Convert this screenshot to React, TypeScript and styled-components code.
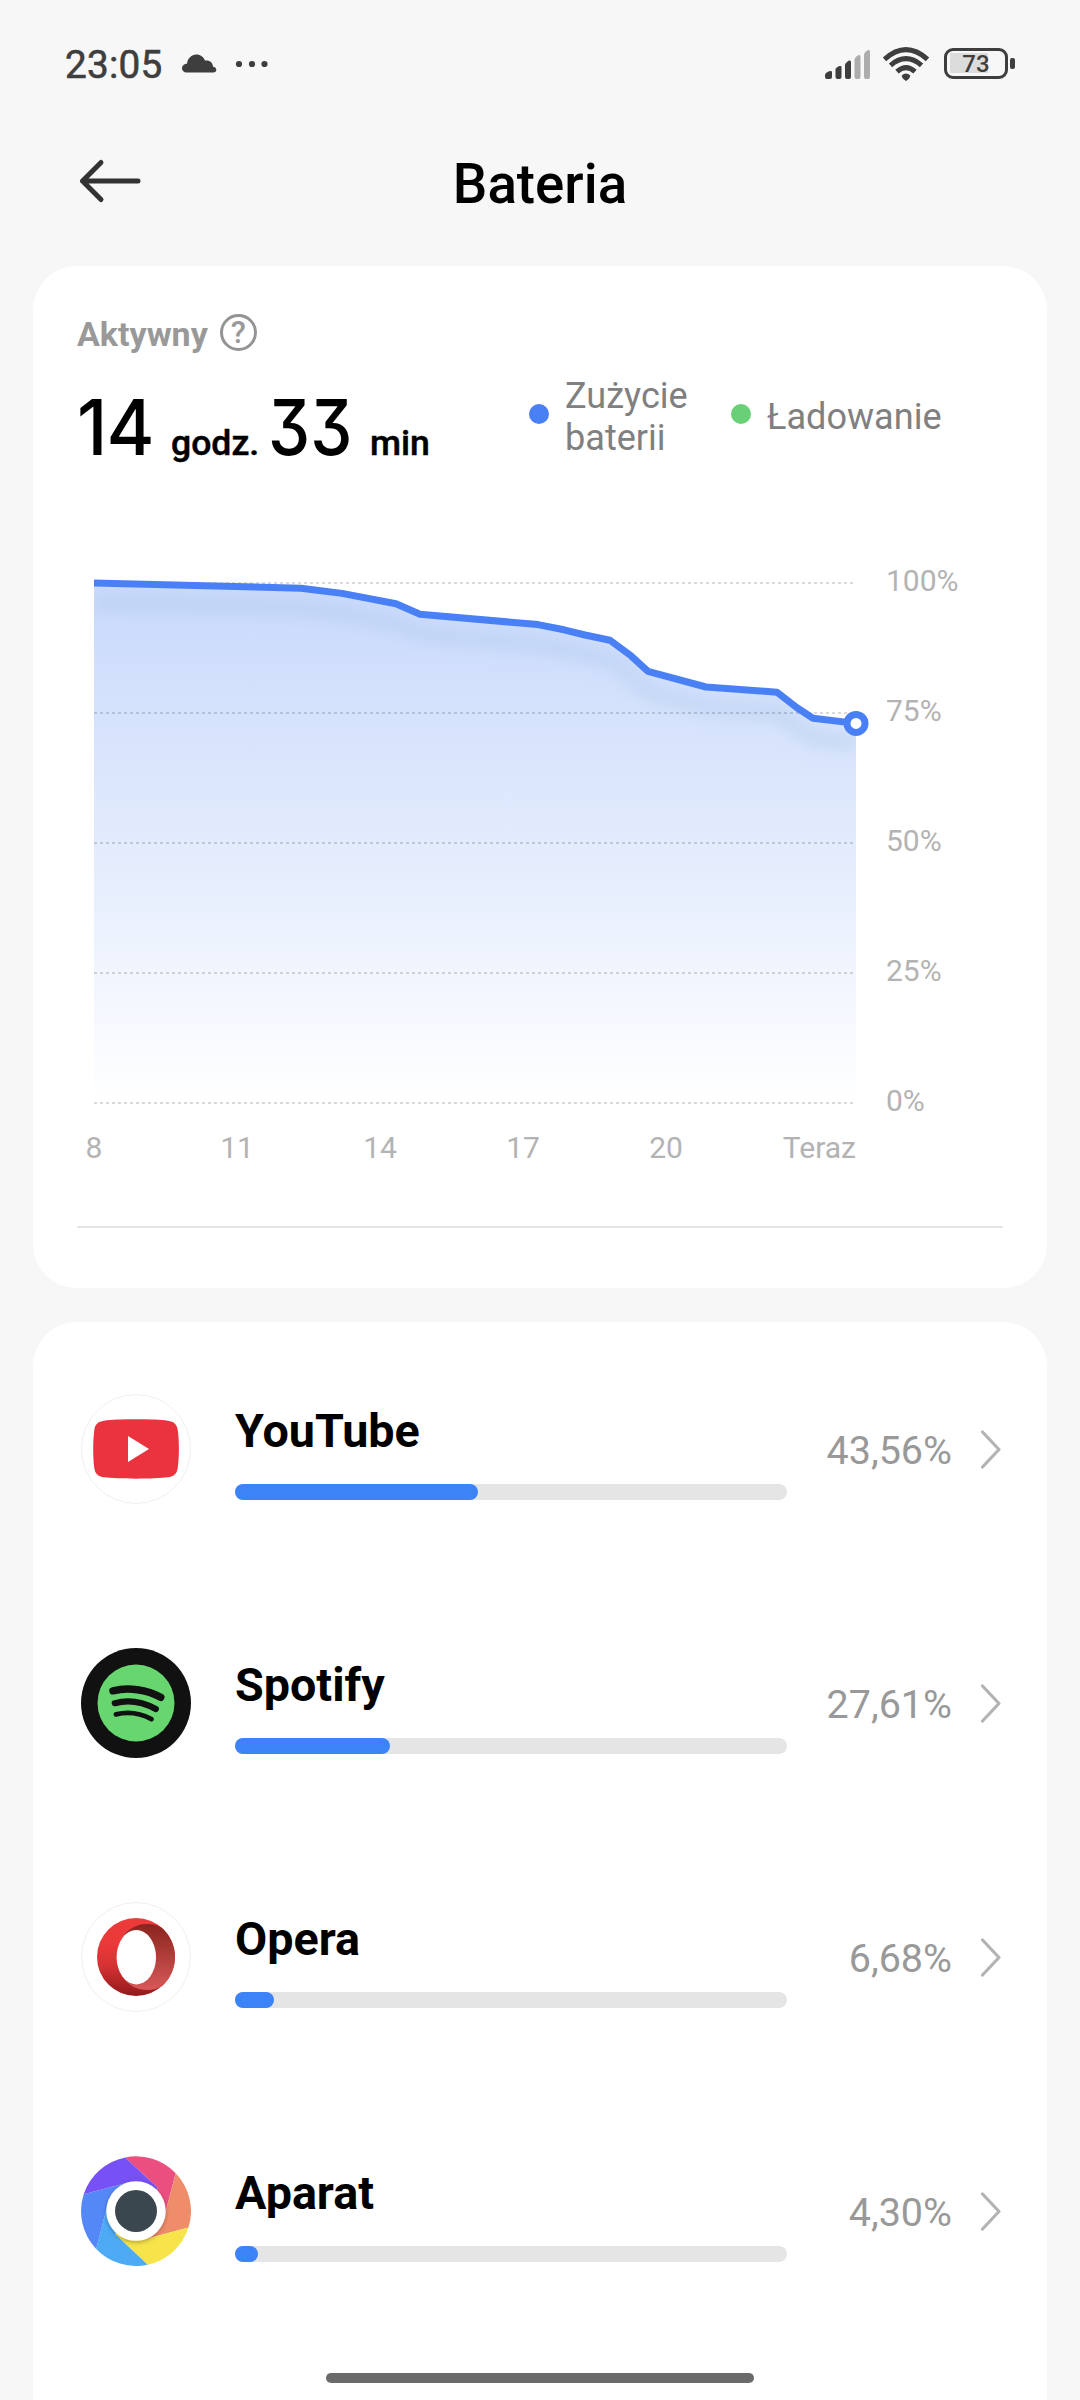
import React from "react";
import styled, { createGlobalStyle } from "styled-components";

const Global = createGlobalStyle`
  * { box-sizing: border-box; }
  body { margin: 0; background: #f7f7f7; }
`;

const Screen = styled.div`
  width: 1080px;
  height: 2400px;
  overflow: hidden;
  position: relative;
  display: flex;
  flex-direction: column;
  background: #f7f7f7;
  font-family: Roboto, "Noto Sans", sans-serif;
  color: #000;
`;

const StatusBar = styled.div`
  flex: none;
  height: 88px;
  padding: 39px 65px 0 65px;
  display: flex;
  align-items: center;
  justify-content: space-between;
`;

const StatusGroup = styled.div`
  display: flex;
  align-items: center;
`;

const Clock = styled.span`
  width: 117px;
  padding-top: 2px;
  font-size: 38.7px;
  line-height: 46px;
  letter-spacing: 0.2px;
  color: #3e3e3e;
  -webkit-text-stroke: 0.6px #3e3e3e;
`;

const Battery = styled.div`
  display: flex;
  align-items: center;
  margin-left: 14px;
  gap: 2px;
`;

const BatteryBody = styled.div`
  width: 64px;
  height: 31px;
  border: 3px solid #3e3e3e;
  border-radius: 9px;
  display: flex;
  align-items: center;
  justify-content: center;
  background: linear-gradient(#dcdcdc, #dcdcdc) 3px 2px / 38px 20px no-repeat;
  font-size: 24px;
  line-height: 24px;
  font-weight: 500;
  color: #3e3e3e;
`;

const BatteryTip = styled.div`
  width: 5px;
  height: 11px;
  border-radius: 2px;
  background: #3e3e3e;
`;

const Header = styled.header`
  flex: none;
  height: 178px;
  padding: 8px 78px 0;
  display: grid;
  grid-template-columns: 64px 1fr 64px;
  align-items: center;
`;

const Title = styled.h1`
  margin: 0;
  padding-top: 6px;
  text-align: center;
  font-size: 54.7px;
  line-height: 64px;
  font-weight: 500;
`;

const Card = styled.section<{ $h: number }>`
  flex: none;
  height: ${(p) => p.$h}px;
  margin: 0 33px 34px;
  padding: 0 44px;
  border-radius: 44px;
  background: #fff;
`;

const Summary = styled.div`
  display: grid;
  grid-template-columns: 452px 1fr;
  height: 250px;
`;

const ActiveLabel = styled.div`
  display: flex;
  align-items: center;
  gap: 12px;
  padding-top: 46px;
  font-size: 34px;
  line-height: 44px;
  font-weight: 700;
  color: #999;
`;

const HelpMark = styled.span`
  width: 37px;
  height: 37px;
  margin-bottom: 3px;
  border: 3px solid #949494;
  border-radius: 50%;
  font-size: 31px;
  line-height: 32px;
  font-weight: 500;
  text-align: center;
`;

const Duration = styled.div`
  display: flex;
  align-items: baseline;
  margin-top: 26px;
  line-height: 90px;
  white-space: nowrap;
`;

const Digits = styled.span<{ $w: number; $squeeze: number; $spacing: number }>`
  width: ${(p) => p.$w}px;
  font-family: Inter, Roboto, sans-serif;
  font-size: 77px;
  font-weight: 500;
  letter-spacing: ${(p) => p.$spacing}px;
  font-feature-settings: "cv09" 1;
  transform: scaleX(${(p) => p.$squeeze});
  transform-origin: left;
`;

const Unit = styled.span<{ $w: number }>`
  width: ${(p) => p.$w}px;
  font-size: 35.6px;
  font-weight: 500;
  -webkit-text-stroke: 0.5px #000;
`;

const Legend = styled.div`
  display: flex;
  height: 84px;
  margin-top: 109px;
`;

const LegendItem = styled.div<{ $w: number }>`
  display: flex;
  align-items: center;
  width: ${(p) => p.$w}px;
  font-size: 36.1px;
  line-height: 42px;
  color: #808080;
`;

const Dot = styled.i<{ $c: string }>`
  flex: none;
  width: 20px;
  height: 20px;
  margin: 0 16px 6px 0;
  border-radius: 50%;
  background: ${(p) => p.$c};
`;

const Chart = styled.div`
  display: flex;
  padding-left: 17px;
  height: 651px;
`;

const PlotColumn = styled.div`
  width: 792px;
`;

const Plot = styled.svg`
  display: block;
`;

const XAxis = styled.div`
  display: flex;
  gap: 83px;
  width: 792px;
  margin: 12px 0 0 -30px;
  font-size: 30px;
  line-height: 40px;
  color: #b3b3b3;
`;

const XLabel = styled.span`
  width: 60px;
  text-align: center;
  &:last-child {
    width: auto;
    margin-left: auto;
  }
`;

const YAxis = styled.div`
  display: flex;
  flex-direction: column;
`;

const YLabel = styled.span`
  height: 130px;
  font-size: 30px;
  line-height: 130px;
  color: #b3b3b3;
`;

const Divider = styled.hr`
  height: 2px;
  margin: 59px 0 0;
  border: 0;
  background: #e5e5e5;
`;

const Row = styled.div`
  display: grid;
  grid-template-columns: 154px 552px 1fr 51px;
  align-items: center;
  height: 254px;
  padding-left: 4px;
`;

const RowMain = styled.div`
  padding-top: 5px;
`;

const AppName = styled.div`
  font-size: 46.7px;
  line-height: 54px;
  font-weight: 700;
`;

const Track = styled.div`
  height: 16px;
  margin-top: 26px;
  border-radius: 8px;
  background: #e5e5e5;
`;

const Fill = styled.div`
  height: 100%;
  border-radius: 8px;
  background: #3c83f7;
`;

const Percent = styled.span`
  padding-top: 2px;
  text-align: right;
  font-size: 39.5px;
  color: #999;
`;

const Chevron = styled.svg`
  justify-self: end;
`;

const HomeIndicator = styled.div`
  position: absolute;
  left: 326px;
  bottom: 17px;
  width: 428px;
  height: 10px;
  border-radius: 5px;
  background: #6a6a6a;
`;

const YouTubeIcon = () => (
  <svg width="110" height="110" viewBox="0 0 110 110">
    <circle cx="55" cy="55" r="54.5" fill="#fff" stroke="#e8e8e8" strokeWidth="0.7" />
    <path
      d="M23.500 26.700C35 24.900 75 24.900 86.500 26.700C93.500 27.500 96 30.500 96.800 36.500C98.300 47 98.300 63 96.800 73.500C96 79.500 93.500 82.500 86.500 83.300C75 85.100 35 85.100 23.500 83.300C16.500 82.500 14 79.500 13.200 73.500C11.900 63 11.900 47 13.200 36.500C14 30.500 16.500 27.500 23.500 26.700Z"
      fill="#eb323f"
    />
    <path d="M47 42L68 55L47 68Z" fill="#fff" />
  </svg>
);

const SpotifyIcon = () => (
  <svg width="110" height="110" viewBox="0 0 110 110">
    <circle cx="55" cy="55" r="55" fill="#111" />
    <circle cx="55" cy="55" r="38.500" fill="#67d66f" />
    <g fill="none" stroke="#111" strokeLinecap="round">
      <path d="M32 42.800C47 39 66 41.500 79.700 49.300" strokeWidth="7.500" />
      <path d="M33.800 55.200C47 51.500 62 54 74.800 61" strokeWidth="6.200" />
      <path d="M35 66.400C47 63.500 59 65 70.500 71.200" strokeWidth="4.800" />
    </g>
  </svg>
);

const OperaIcon = () => (
  <svg width="110" height="110" viewBox="0 0 110 110">
    <defs>
      <linearGradient id="operaRed" x1="0" y1="0" x2="0" y2="1">
        <stop offset="0.3" stopColor="#ec3a3b" />
        <stop offset="0.6" stopColor="#d83233" />
        <stop offset="1" stopColor="#921a1b" />
      </linearGradient>
      <linearGradient id="operaDark" x1="0" y1="0" x2="0" y2="1">
        <stop offset="0" stopColor="#8a241e" />
        <stop offset="1" stopColor="#d85958" />
      </linearGradient>
    </defs>
    <circle cx="55" cy="55" r="54.500" fill="#fff" stroke="#e8e8e8" strokeWidth="0.7" />
    <circle cx="55" cy="55" r="39" fill="url(#operaRed)" />
    <path
      d="M43 33C49 26 56 22 66 22C72 22 76 23 80.500 25.500A39 39 0 0 1 80.500 84.500C76 87 72 88 66 88C56 88 49 84 43 77Z"
      fill="url(#operaDark)"
    />
    <ellipse cx="55.300" cy="55.200" rx="19.700" ry="27.200" fill="#fff" />
  </svg>
);

const CameraIcon = () => (
  <svg width="110" height="110" viewBox="0 0 110 110">
    <defs>
      <filter id="lensShadow" x="-30%" y="-30%" width="160%" height="160%">
        <feDropShadow dx="0" dy="1.500" stdDeviation="2" floodColor="#000" floodOpacity="0.3" />
      </filter>
    </defs>
    <path d="M44.200 1.400A55 55 0 0 1 94.700 17.200L84 58L55 55L77 32Z" fill="#ea4f80" />
    <path d="M94.700 17.200A55 55 0 0 1 107.500 71.600L63 83.500L55 55L84 58Z" fill="#ef8d6b" />
    <path d="M107.500 71.600A55 55 0 0 1 66.700 108.700L34 78L55 55L63 83.500Z" fill="#f7e34a" />
    <path d="M66.700 108.700A55 55 0 0 1 15.200 93L26 51L55 55L34 78Z" fill="#4dabf5" />
    <path d="M15.200 93A55 55 0 0 1 2.700 38.200L47 26.500L55 55L26 51Z" fill="#5588f7" />
    <path d="M2.700 38.200A55 55 0 0 1 44.200 1.400L77 32L55 55L47 26.500Z" fill="#7750f6" />
    <circle cx="55" cy="55" r="29.700" fill="#fff" filter="url(#lensShadow)" />
    <circle cx="55" cy="55" r="21" fill="#3b474f" />
  </svg>
);

const apps = [
  { name: "YouTube", percent: "43,56%", fill: 44, Icon: YouTubeIcon },
  { name: "Spotify", percent: "27,61%", fill: 28, Icon: SpotifyIcon },
  { name: "Opera", percent: "6,68%", fill: 7, Icon: OperaIcon },
  { name: "Aparat", percent: "4,30%", fill: 4.15, Icon: CameraIcon },
];

// x offset inside the plot, battery level in percent
const levels: [number, number][] = [
  [0, 100], [207, 99], [248, 98], [302, 96], [326, 94], [444, 92], [470, 91],
  [491, 90], [516, 89], [537, 86], [554, 83], [612, 80], [683, 79], [703, 76],
  [719, 74], [762, 73],
];
const yOf = (level: number) => 67 + (100 - level) * 5.2;
const line = levels.map(([x, l]) => `${x},${yOf(l)}`).join(" ");
const area = `0,587 ${line} 762,587`;

const BatteryPlot = () => (
  <Plot width="792" height="600" viewBox="0 0 792 600">
    <defs>
      <linearGradient id="areaFill" gradientUnits="userSpaceOnUse" x1="0" y1="67" x2="0" y2="587">
        <stop offset="0" stopColor="#4a80f5" stopOpacity="0.300" />
        <stop offset="0.5" stopColor="#4a82f0" stopOpacity="0.158" />
        <stop offset="1" stopColor="#4a80f5" stopOpacity="0" />
      </linearGradient>
      <filter id="soft" filterUnits="userSpaceOnUse" x="-20" y="40" width="830" height="300">
        <feGaussianBlur stdDeviation="7" />
      </filter>
      <clipPath id="areaClip">
        <polygon points={area} />
      </clipPath>
      <clipPath id="plotClip">
        <rect x="0" y="0" width="792" height="600" />
      </clipPath>
    </defs>
    <polygon points={area} fill="url(#areaFill)" />
    <g clipPath="url(#areaClip)">
      <polyline
        points={line}
        transform="translate(0 20)"
        fill="none"
        stroke="#a6c8e8"
        strokeOpacity="0.340"
        strokeWidth="18"
        filter="url(#soft)"
      />
    </g>
    {[67, 197, 327, 457, 587].map((y) => (
      <line key={y} x1="0" x2="760" y1={y} y2={y} stroke="#000" strokeOpacity="0.150" strokeWidth="2" strokeDasharray="3 3" />
    ))}
    <polyline points={line} fill="none" stroke="#4a80f5" strokeWidth="7" strokeLinejoin="round" clipPath="url(#plotClip)" />
    <circle cx="762" cy={yOf(73)} r="9" fill="#fff" stroke="#4a80f5" strokeWidth="7" />
  </Plot>
);

export default function App() {
  return (
    <Screen>
      <Global />
      <StatusBar>
        <StatusGroup>
          <Clock>23:05</Clock>
          <svg width="90" height="30" viewBox="182 50 90 30" fill="#3e3e3e">
            <path d="M186.500 73.500C184 73.500 182 71.700 182 69.300C182 67 184 64.800 187 64.800C187.500 59.500 191.500 55.500 196.500 55.500C200.500 55.500 203.500 58 205 61.500C209.500 60.800 213 63.500 213 67.800C215 68 216.300 69.300 216.300 71C216.300 72.500 215.200 73.500 213.500 73.500Z" />
            <circle cx="239" cy="65" r="3.100" />
            <circle cx="252" cy="65" r="3.100" />
            <circle cx="264.500" cy="65" r="3.100" />
          </svg>
        </StatusGroup>
        <StatusGroup>
          <svg width="105" height="40" viewBox="825 44 105 40">
            <g fill="#3e3e3e">
              <path d="M825 75C825 73 827 72 830 71Q832 70.500 832 72V77Q832 79 830 79H827Q825 79 825 77Z" />
              <path d="M835.500 69.500Q835.500 67.500 839.500 66Q841.500 65.500 841.500 67V77Q841.500 79 839.500 79H837.500Q835.500 79 835.500 77Z" />
              <path d="M845 65Q845 63 849 60.500Q851 60 851 62V77Q851 79 849 79H847Q845 79 845 77Z" />
            </g>
            <g fill="#adadad">
              <path d="M854.500 60Q854.500 57.500 858.500 55Q860.500 54.500 860.500 56.500V77Q860.500 79 858.500 79H856.500Q854.500 79 854.500 77Z" />
              <path d="M864 55Q864 52.500 868 50Q870 49.500 870 51.500V77Q870 79 868 79H866Q864 79 864 77Z" />
            </g>
            <g fill="none" stroke="#3e3e3e" strokeWidth="5">
              <path d="M884.500 59.300Q906 40 927.500 59.300" />
              <path d="M890.500 65.300Q906 52 921.500 65.300" />
              <path d="M897 71.700Q906 63.500 915 71.700" />
            </g>
            <path d="M901.700 75.500Q906 71.500 910.300 75.500Q910 78.500 906 81Q902 78.500 901.700 75.500Z" fill="#3e3e3e" />
          </svg>
          <Battery>
            <BatteryBody>73</BatteryBody>
            <BatteryTip />
          </Battery>
        </StatusGroup>
      </StatusBar>

      <Header>
        <svg width="64" height="48" viewBox="78 157 64 48" fill="none" stroke="#333" strokeWidth="5" strokeLinecap="round" strokeLinejoin="round">
          <path d="M101 162.500L82.500 181L101 199.500M82.500 181H138" />
        </svg>
        <Title>Bateria</Title>
      </Header>

      <Card $h={1022}>
        <Summary>
          <div>
            <ActiveLabel>
              Aktywny
              <HelpMark>?</HelpMark>
            </ActiveLabel>
            <Duration>
              <Digits $w={94} $squeeze={0.95} $spacing={-1}>14</Digits>
              <Unit $w={97}>godz.</Unit>
              <Digits $w={102} $squeeze={0.87} $spacing={0}>33</Digits>
              <Unit $w={70}>min</Unit>
            </Duration>
          </div>
          <Legend>
            <LegendItem $w={202}>
              <Dot $c="#4a80f5" />
              <span>Zużycie<br />baterii</span>
            </LegendItem>
            <LegendItem $w={230}>
              <Dot $c="#6ad077" />
              <span>Ładowanie</span>
            </LegendItem>
          </Legend>
        </Summary>
        <Chart>
          <PlotColumn>
            <BatteryPlot />
            <XAxis>
              {["8", "11", "14", "17", "20", "Teraz"].map((t) => (
                <XLabel key={t}>{t}</XLabel>
              ))}
            </XAxis>
          </PlotColumn>
          <YAxis>
            {["100%", "75%", "50%", "25%", "0%"].map((t) => (
              <YLabel key={t}>{t}</YLabel>
            ))}
          </YAxis>
        </Chart>
        <Divider />
      </Card>

      <Card $h={1200}>
        {apps.map(({ name, percent, fill, Icon }) => (
          <Row key={name}>
            <Icon />
            <RowMain>
              <AppName>{name}</AppName>
              <Track>
                <Fill style={{ width: `${fill}%` }} />
              </Track>
            </RowMain>
            <Percent>{percent}</Percent>
            <Chevron width="24" height="42" viewBox="0 0 24 42" fill="none" stroke="#b3b3b3" strokeWidth="3.200" strokeLinecap="round" strokeLinejoin="round">
              <path d="M3.500 4L20 21.500L3.500 39" />
            </Chevron>
          </Row>
        ))}
      </Card>
      <HomeIndicator />
    </Screen>
  );
}
